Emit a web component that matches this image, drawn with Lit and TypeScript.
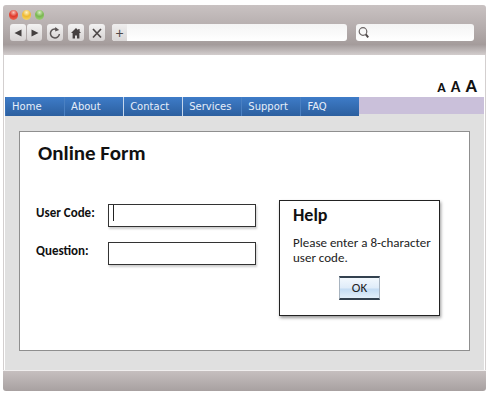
import { LitElement, html, css, svg } from "lit";
import { customElement, property } from "lit/decorators.js";

const icons = {
  back: svg`<path d="M11.500 4.500v7L4.500 8z" fill="#454040"/>`,
  forward: svg`<path d="M4.500 4.500v7l7-3.500z" fill="#454040"/>`,
  reload: svg`<path d="M9.500 4.200A4.500 4.500 0 1 0 12.400 9" fill="none" stroke="#5a5454" stroke-width="1.500"/><path d="M8.200 2v4.600l4-1.600z" fill="#5a5454"/>`,
  home: svg`<path d="M8 3 3 8h1.600v5.500h2.400v-3h2v3h2.400V8H13l-1.400-1.400V4h-1.400v1.200z" fill="#453f3f"/>`,
  stop: svg`<path d="M4 4l8 8.500M12 4l-8 8.500" fill="none" stroke="#4e4848" stroke-width="1.700"/>`,
  search: svg`<circle cx="7" cy="7.500" r="3.800" fill="none" stroke="#6b6565" stroke-width="1.200"/><path d="M9.800 10.300l2.400 3" fill="none" stroke="#4e4848" stroke-width="2"/>`,
};

@customElement("browser-bar")
class BrowserBar extends LitElement {
  static styles = css`
    :host {
      display: block;
      border-radius: 3px 3px 0 0;
      background: linear-gradient(#c9c2c2, #b3abab 50%, #9a9190);
    }
    .lights {
      display: flex;
      gap: 4px;
      padding: 5px 6px 4px;
    }
    .light {
      width: 9px;
      height: 10px;
      padding: 0;
      border: 0;
      border-radius: 50%;
    }
    .red { background: radial-gradient(circle at 50% 25%, #f9c4b8, #e0392b 45%, #ee7a63); }
    .yellow { background: radial-gradient(circle at 50% 25%, #fff2c4, #f0b92f 45%, #f8e07a); }
    .green { background: radial-gradient(circle at 50% 25%, #d6efbf, #79b650 45%, #a9da84); }
    .tools {
      display: flex;
      padding: 0 12px 4px 7px;
    }
    .tool {
      width: 16px;
      height: 17px;
      padding: 0;
      border: 0;
      border-radius: 3px;
      background: linear-gradient(#f3f2f2, #d6d2d2);
    }
    .tool + .tool { margin-left: 5px; }
    .tool.joined { margin-left: 0; border-left: 1px solid #b3abab; }
    .tool svg, .search svg { display: block; width: 16px; height: 16px; }
    .address {
      display: flex;
      flex: 2;
      margin: 0 9px 0 7px;
      border-radius: 3px;
      overflow: hidden;
      background: linear-gradient(#f4f4f4, #ffffff);
    }
    .add {
      width: 15px;
      padding: 0;
      border: 0;
      background: linear-gradient(#efeeee, #dad7d7);
      color: #4e4848;
      font: 14px/16px "Liberation Sans", sans-serif;
    }
    .search {
      display: flex;
      flex: 1;
      border-radius: 3px;
      background: linear-gradient(#f4f4f4, #ffffff);
    }
    input {
      flex: 1;
      min-width: 0;
      width: 0;
      height: 17px;
      padding: 0 4px;
      border: 0;
      outline: 0;
      box-sizing: border-box;
      background: none;
    }
    .strip {
      height: 10px;
      background: linear-gradient(#a69e9e, #d3cdcd);
    }
  `;

  private tool(name: keyof typeof icons, label: string, extra = "") {
    return html`<button class="tool ${extra}" aria-label=${label}>
      <svg viewBox="0 0 16 16">${icons[name]}</svg>
    </button>`;
  }

  render() {
    return html`
      <div class="lights">
        <button class="light red" aria-label="Close"></button>
        <button class="light yellow" aria-label="Minimize"></button>
        <button class="light green" aria-label="Zoom"></button>
      </div>
      <div class="tools">
        ${this.tool("back", "Back")}${this.tool("forward", "Forward", "joined")}
        ${this.tool("reload", "Reload")}${this.tool("home", "Home page")}${this.tool("stop", "Stop")}
        <div class="address">
          <button class="add" aria-label="Add bookmark">+</button>
          <input type="text" aria-label="Address" />
        </div>
        <label class="search">
          <svg viewBox="0 0 16 16">${icons.search}</svg>
          <input type="text" aria-label="Search" />
        </label>
      </div>
      <div class="strip"></div>
    `;
  }
}

@customElement("help-box")
class HelpBox extends LitElement {
  @property() message = "";

  static styles = css`
    :host {
      display: block;
      box-sizing: border-box;
      padding: 4px 6px 15px 13px;
      border: 1px solid #222;
      background: #fff;
      box-shadow: 1px 2px 3px rgba(0, 0, 0, 0.4);
    }
    h2 {
      margin: 0 0 10px;
      font-size: 18px;
      line-height: 20px;
    }
    p {
      margin: 0;
      color: #222;
      font-size: 13px;
      line-height: 15px;
    }
    .ok {
      display: block;
      width: 41px;
      height: 24px;
      margin: 11px auto 0 46px;
      padding: 0;
      border: solid #33414f;
      border-width: 2px 1px;
      border-left-color: #a8b4c0;
      border-right-color: #a8b4c0;
      background: linear-gradient(#f2f8fd, #dfecf9 50%, #c4dcf3 55%, #e2effa);
      color: #222;
      font: 13px/18px Carlito, Lato, sans-serif;
    }
  `;

  render() {
    return html`
      <h2>Help</h2>
      <p>${this.message}</p>
      <button class="ok">OK</button>
    `;
  }
}

@customElement("app-root")
class AppRoot extends LitElement {
  static styles = css`
    :host {
      display: block;
      padding: 5px 4px 16px 3px;
      background: #fff;
      color: #111;
      font-family: Carlito, Lato, sans-serif;
    }
    .content {
      border: solid #d3cfcf;
      border-width: 0 1px;
      padding: 0 1px;
      background: #fff;
    }
    .sizes {
      display: flex;
      justify-content: flex-end;
      align-items: baseline;
      gap: 5px;
      height: 21px;
      padding: 21px 7px 0 0;
    }
    .size {
      padding: 0;
      border: 0;
      background: none;
      color: #111;
      font-family: inherit;
      font-weight: 700;
      line-height: 20px;
    }
    .small { font-size: 14px; }
    .medium { font-size: 16px; }
    .large { font-size: 19px; }
    nav {
      background: linear-gradient(#cac0da 17px, #e0e0e0 17px);
    }
    ul {
      display: grid;
      grid-template-columns: repeat(6, 1fr);
      width: 74%;
      margin: 0;
      padding: 0;
      list-style: none;
      background: linear-gradient(#3e7cc8, #2c5f9f);
    }
    li { border-left: 1px solid #4a80c2; }
    li:first-child { border-left-color: #3a72b8; }
    li.bright { border-left-color: #c5d6ec; }
    nav a {
      display: block;
      padding-left: 6px;
      color: #e6eefa;
      font: 10px/19px "DejaVu Sans", sans-serif;
      text-decoration: none;
    }
    main {
      padding: 15px 14px 19px;
      background: #e0e0e0;
    }
    .panel {
      padding: 9px 29px 34px 16px;
      border: 1px solid #8f8f8f;
      background: #fff;
    }
    h1 {
      margin: 0 0 34px 2px;
      font-size: 21px;
      line-height: 25px;
    }
    .columns {
      display: grid;
      grid-template-columns: 220px 1fr;
      gap: 23px;
      align-items: start;
    }
    form {
      display: grid;
      gap: 15px;
      padding-top: 4px;
    }
    .row {
      display: grid;
      grid-template-columns: 72px 1fr;
    }
    .row label {
      font-size: 13px;
      font-weight: 700;
      line-height: 17px;
    }
    .field {
      position: relative;
      display: flex;
    }
    .field input {
      width: 100%;
      height: 23px;
      box-sizing: border-box;
      padding: 0 5px;
      border: 1px solid #333;
      outline: 0;
      background: #fff;
      box-shadow: 1px 2px 2px rgba(0, 0, 0, 0.2);
      font: 13px/17px Carlito, Lato, sans-serif;
    }
    .active::after {
      content: "";
      position: absolute;
      top: 1px;
      left: 5px;
      width: 1px;
      height: 16px;
      background: #222;
    }
    footer {
      height: 20px;
      border-top: 1px solid #f0eeee;
      border-radius: 0 0 3px 3px;
      background: linear-gradient(#c6bfbf, #a8a1a1);
    }
  `;

  private links = ["Home", "About", "Contact", "Services", "Support", "FAQ"];

  render() {
    return html`
      <browser-bar></browser-bar>
      <div class="content">
        <div class="sizes">
          <button class="size small">A</button>
          <button class="size medium">A</button>
          <button class="size large">A</button>
        </div>
        <nav>
          <ul>
            ${this.links.map(
              (name, i) => html`<li class=${i === 2 || i === 3 ? "bright" : ""}><a href="#">${name}</a></li>`
            )}
          </ul>
        </nav>
        <main>
          <div class="panel">
            <h1>Online Form</h1>
            <div class="columns">
              <form>
                <div class="row">
                  <label for="code">User Code:</label>
                  <div class="field active"><input id="code" type="text" /></div>
                </div>
                <div class="row">
                  <label for="question">Question:</label>
                  <div class="field"><input id="question" type="text" /></div>
                </div>
              </form>
              <help-box message="Please enter a 8-character user code."></help-box>
            </div>
          </div>
        </main>
      </div>
      <footer></footer>
    `;
  }
}
